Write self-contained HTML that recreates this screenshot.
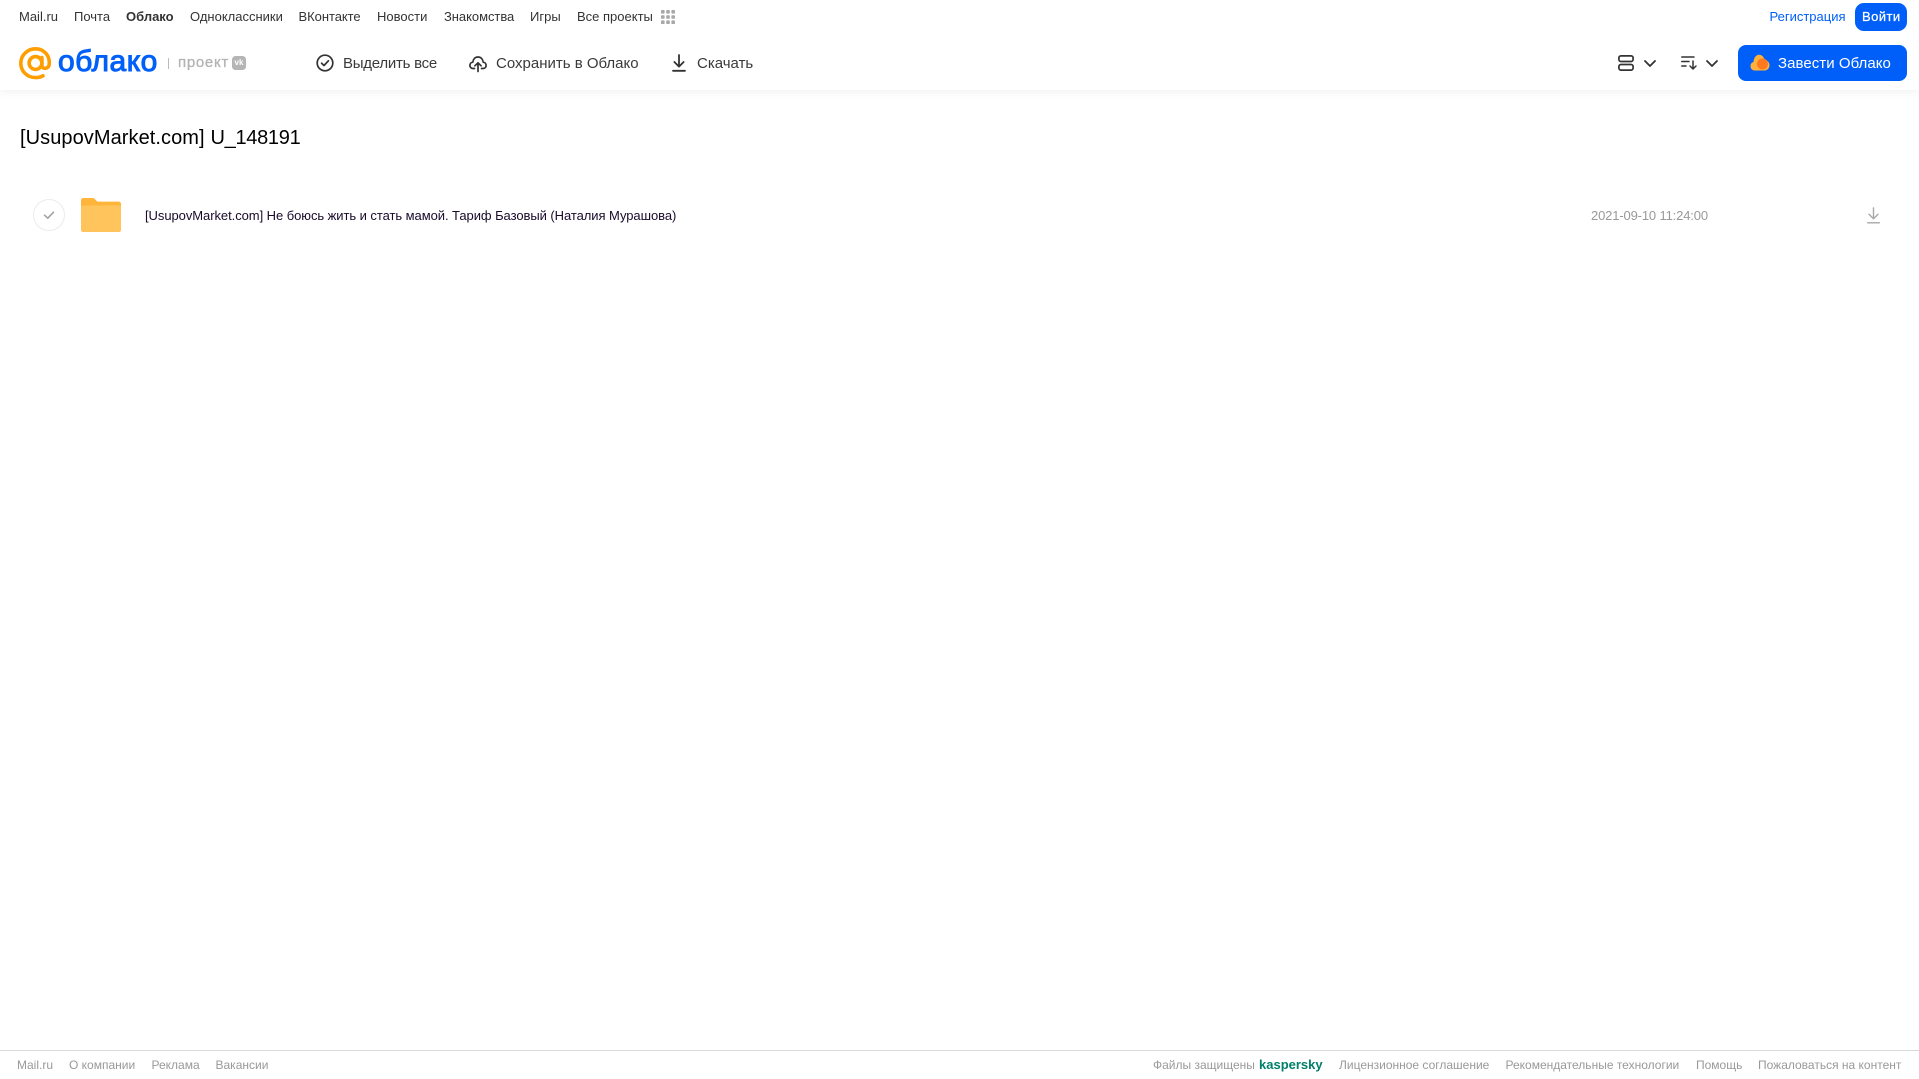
<!DOCTYPE html>
<html lang="ru">
<head>
<meta charset="utf-8">
<title>Облако</title>
<style>
html,body{margin:0;padding:0;background:#fff;}
body{width:1919px;height:1079px;position:relative;overflow:hidden;font-family:"Liberation Sans",Arial,sans-serif;}
.t{position:absolute;white-space:nowrap;line-height:20px;height:20px;}
.n{font-size:13px;top:7px;color:#333;}
.b{font-size:15px;top:53.5px;color:#3a3a3a;}
.f{font-size:12px;top:1055px;color:#999;}
svg{position:absolute;overflow:visible;}
#hdr{position:absolute;left:0;top:0;width:1919px;height:90px;background:#fff;box-shadow:0 2px 8px rgba(0,0,0,.06);}
</style>
</head>
<body>
<div id="hdr"></div>

<span class="t n" style="left:19px">Mail.ru</span>
<span class="t n" style="left:74px">Почта</span>
<span class="t n" style="left:126px;font-weight:bold">Облако</span>
<span class="t n" style="left:190px">Одноклассники</span>
<span class="t n" style="left:298.5px;letter-spacing:-.05px">ВКонтакте</span>
<span class="t n" style="left:377px">Новости</span>
<span class="t n" style="left:444px;letter-spacing:-.05px">Знакомства</span>
<span class="t n" style="left:530px">Игры</span>
<span class="t n" style="left:577px">Все проекты</span>
<svg style="left:661px;top:10px" width="14" height="14" viewBox="0 0 14 14" fill="#a8a8a8">
<rect x="0" y="0" width="3.6" height="3.6" rx=".8"/><rect x="5.2" y="0" width="3.6" height="3.6" rx=".8"/><rect x="10.4" y="0" width="3.6" height="3.6" rx=".8"/>
<rect x="0" y="5.2" width="3.6" height="3.6" rx=".8"/><rect x="5.2" y="5.2" width="3.6" height="3.6" rx=".8"/><rect x="10.4" y="5.2" width="3.6" height="3.6" rx=".8"/>
<rect x="0" y="10.4" width="3.6" height="3.6" rx=".8"/><rect x="5.2" y="10.4" width="3.6" height="3.6" rx=".8"/><rect x="10.4" y="10.4" width="3.6" height="3.6" rx=".8"/>
</svg>

<span class="t n" style="left:1769.5px;color:#005ff9">Регистрация</span>
<div style="position:absolute;left:1855px;top:3px;width:52px;height:28px;background:#005ff9;border-radius:9px"></div>
<span class="t n" style="left:1862px;color:#fff;top:7px;letter-spacing:.45px;-webkit-text-stroke:.25px #fff">Войти</span>

<!-- logo -->
<svg style="left:19px;top:47px" width="33" height="33" viewBox="0 0 33 33" fill="none" stroke="#ff9e00" stroke-width="3.6">
<circle cx="16.5" cy="16" r="6.4"/>
<path d="M22.9 10.5V18.5C22.9 22.5 29.6 22.5 30.2 17.5C31.2 8 24.5 1.8 16.5 1.8C8.5 1.8 1.8 8.2 1.8 16.2C1.8 24.5 8.5 30.6 16.5 30.6C19.5 30.6 22 30 24 28.8" stroke-linecap="round"/>
</svg>
<span class="t" style="left:58px;top:44px;height:36px;line-height:36px;font-size:30px;color:#005ff9;letter-spacing:.5px;-webkit-text-stroke:1px #005ff9">облако</span>
<div style="position:absolute;left:168px;top:58px;width:1px;height:11px;background:#bbb"></div>
<span class="t" style="left:178px;top:53px;font-size:15px;color:#b3b3b3;letter-spacing:.7px;-webkit-text-stroke:.3px #b3b3b3">проект</span>
<div style="position:absolute;left:232px;top:56px;width:14px;height:14px;border-radius:3.5px;background:#b5b5b5"></div>
<span class="t" style="left:232px;top:56px;width:14px;height:14px;line-height:14px;font-size:8px;font-weight:bold;color:#fff;text-align:center">vk</span>

<!-- toolbar -->
<svg style="left:316px;top:54px" width="18" height="18" viewBox="0 0 18 18" fill="none" stroke="#333" stroke-width="1.7">
<circle cx="9" cy="9" r="7.8"/><path d="M5.6 9.2L8 11.5L12.4 6.8" stroke-linecap="round" stroke-linejoin="round"/>
</svg>
<span class="t b" style="left:343px;letter-spacing:-.25px">Выделить все</span>

<svg style="left:469px;top:54px" width="18" height="18" viewBox="0 0 18 18" fill="none" stroke="#333" stroke-width="1.7" stroke-linecap="round" stroke-linejoin="round">
<path d="M5.5 14.5H4C2 14.5 .9 13 .9 11.4C.9 9.6 2.2 8.3 3.8 8.2C4.2 5 6.3 3 9 3C11.7 3 13.8 5 14.2 8.2C15.8 8.3 17.1 9.6 17.1 11.4C17.1 13 16 14.5 14 14.5H12.5"/>
<path d="M9 17.5V9M5.9 11.8L9 8.8L12.1 11.8"/>
</svg>
<span class="t b" style="left:496px">Сохранить в Облако</span>

<svg style="left:672px;top:54px" width="14" height="18" viewBox="0 0 14 18" fill="none" stroke="#333" stroke-width="1.8" stroke-linecap="round" stroke-linejoin="round">
<path d="M7 1V12.5M2.4 8L7 12.6L11.6 8"/><path d="M1 16.8H13"/>
</svg>
<span class="t b" style="left:697px">Скачать</span>

<!-- view / sort -->
<svg style="left:1618px;top:55px" width="16" height="16" viewBox="0 0 16 16" fill="none" stroke="#333" stroke-width="1.7">
<rect x=".9" y=".9" width="14.2" height="5.6" rx="2"/><rect x=".9" y="9.5" width="14.2" height="5.6" rx="2"/>
</svg>
<svg style="left:1644px;top:60px" width="12" height="7" viewBox="0 0 12 7" fill="none" stroke="#333" stroke-width="1.8" stroke-linecap="round" stroke-linejoin="round"><path d="M1 1L6 6L11 1"/></svg>
<svg style="left:1681px;top:56px" width="16" height="14" viewBox="0 0 16 14" fill="none" stroke="#333" stroke-width="1.5" stroke-linecap="round" stroke-linejoin="round">
<path d="M.8 1H13M.8 5.5H8M.8 10H5"/><path d="M12 5V12.8M9 10L12 13L15 10"/>
</svg>
<svg style="left:1706px;top:60px" width="12" height="7" viewBox="0 0 12 7" fill="none" stroke="#333" stroke-width="1.8" stroke-linecap="round" stroke-linejoin="round"><path d="M1 1L6 6L11 1"/></svg>

<div style="position:absolute;left:1738px;top:45px;width:169px;height:36px;background:#005ff9;border-radius:8px"></div>
<svg style="left:1750px;top:54px" width="20" height="17" viewBox="0 0 20 17">
<path d="M5 16.5C2 16.5 .5 14.5 .5 12C.5 9.8 2 8.3 3.5 8C3.8 3.5 6.3 .8 9 .8C11.8 .8 14 3 14.5 6C17.5 6 19.5 8.5 19.5 11.3C19.5 14.3 17.3 16.5 14.5 16.5Z" fill="#ffb13c"/>
<circle cx="12.5" cy="10" r="5.5" fill="#ff7a1e"/>
</svg>
<span class="t b" style="left:1778px;color:#fff;letter-spacing:.05px">Завести Облако</span>

<!-- title -->
<span class="t" style="left:20px;top:124px;height:28px;line-height:28px;font-size:20px;color:#000;letter-spacing:.07px">[UsupovMarket.com]</span>
<span class="t" style="left:210.5px;top:124px;height:28px;line-height:28px;font-size:20px;color:#000;letter-spacing:-.3px">U_148191</span>

<!-- row -->
<svg style="left:33px;top:199px" width="32" height="32" viewBox="0 0 32 32" fill="none">
<circle cx="16" cy="16" r="15.5" stroke="#ebebeb" stroke-width="1"/>
<path d="M11.5 16.2L14.8 19.2L20.5 13.2" stroke="#a0a0a0" stroke-width="1.5" stroke-linecap="round" stroke-linejoin="round"/>
</svg>
<svg style="left:81px;top:198px" width="40" height="34" viewBox="0 0 40 34">
<path d="M2.5 0H11C13 0 14 1 15 2.2C15.8 3.3 16.5 3.6 18 3.6H37.5C39 3.6 40 4.6 40 6V31.5C40 33 39 34 37.5 34H2.5C1 34 0 33 0 31.5V2.5C0 1 1 0 2.5 0Z" fill="#ffb53a"/>
<path d="M0 9C0 8 .8 7.5 2 7.5H38C39.2 7.5 40 8 40 9V31.5C40 33 39 34 37.5 34H2.5C1 34 0 33 0 31.5Z" fill="#ffc55c"/>
</svg>
<span class="t" style="left:145px;top:206px;font-size:13px;color:#1a0a2a;letter-spacing:-.06px">[UsupovMarket.com] Не боюсь жить и стать мамой. Тариф Базовый (Наталия Мурашова)</span>
<span class="t" style="left:1591px;top:206px;font-size:13px;color:#999;letter-spacing:-.15px">2021-09-10 11:24:00</span>
<svg style="left:1867px;top:207px" width="13" height="17" viewBox="0 0 13 17" fill="none" stroke="#a8a8a8" stroke-width="1.4" stroke-linecap="round" stroke-linejoin="round">
<path d="M6.5 1V11.5M2 7.2L6.5 11.7L11 7.2"/><path d="M.6 15.8H12.4"/>
</svg>

<!-- footer -->
<div style="position:absolute;left:0;top:1050px;width:1919px;height:1px;background:#d9d9d9"></div>
<span class="t f" style="left:17px">Mail.ru</span>
<span class="t f" style="left:69px">О компании</span>
<span class="t f" style="left:151.5px">Реклама</span>
<span class="t f" style="left:215.5px">Вакансии</span>
<span class="t f" style="left:1153px">Файлы защищены</span>
<span class="t" style="left:1259px;top:1055px;font-size:13px;font-weight:bold;color:#00806a">kaspersky</span>
<span class="t f" style="left:1339px">Лицензионное соглашение</span>
<span class="t f" style="left:1505.5px">Рекомендательные технологии</span>
<span class="t f" style="left:1696px">Помощь</span>
<span class="t f" style="left:1758px">Пожаловаться на контент</span>
</body>
</html>
